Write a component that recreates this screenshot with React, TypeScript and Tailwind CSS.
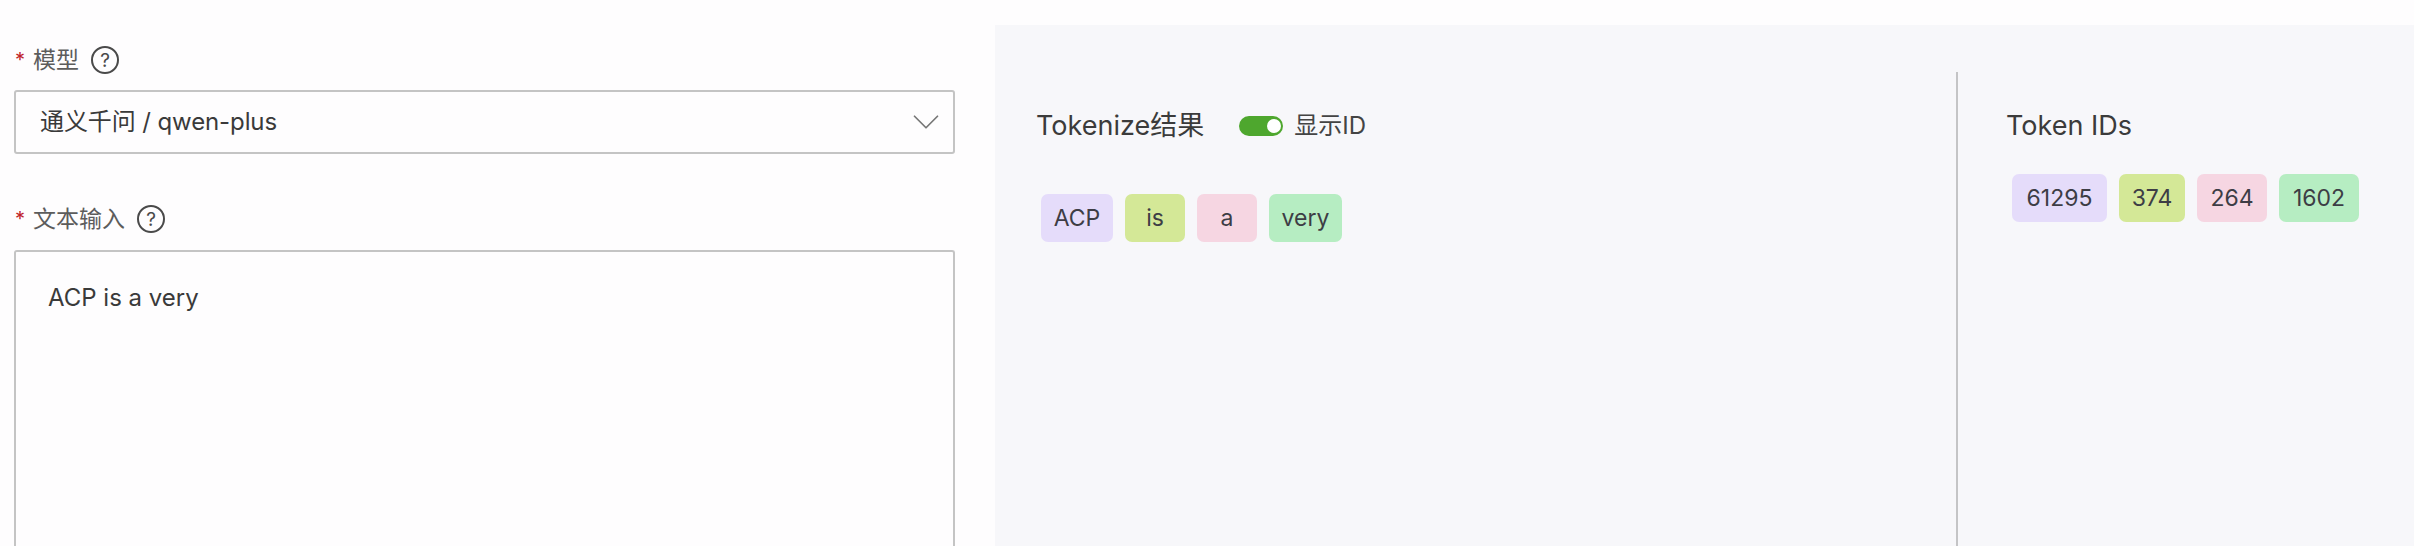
import { ChevronDown } from 'lucide-react'

const colors = ['bg-[#e5dcfa]', 'bg-[#d4e897]', 'bg-[#f6d6e2]', 'bg-[#b6edc2]']

const fontStack = '[font-family:"Inter","Noto_Sans_CJK_SC",sans-serif]'

function HelpIcon() {
  return (
    <span className="flex h-[28px] w-[28px] items-center justify-center rounded-full border-2 border-[#4a4a4a] text-[19px] leading-none text-[#4a4a4a]">
      ?
    </span>
  )
}

function FieldLabel({ text }: { text: string }) {
  return (
    <div className="flex h-[30px] items-center pl-[15px] text-[23px] text-[#5c5c5c]">
      <span className="mr-[8px] text-[20px] text-[#c0232c]">*</span>
      <span className="mr-[12px]">{text}</span>
      <HelpIcon />
    </div>
  )
}

function Token({ text, color, width }: { text: string; color: string; width: string }) {
  return (
    <span className={`flex h-[48px] items-center justify-center rounded-[7px] text-[23px] text-[#3d3d45] ${color} ${width}`}>
      {text}
    </span>
  )
}

export default function App() {
  return (
    <div className={`flex h-[546px] w-[2414px] overflow-hidden bg-[#fefdfe] ${fontStack}`}>
      <div className="flex w-[995px] shrink-0 flex-col pt-[45px]">
        <FieldLabel text="模型" />
        <div className="mt-[15px] ml-[14px] flex h-[64px] w-[941px] items-center justify-between rounded-[3px] border-2 border-[#c4c4c4] pr-[4px] pl-[24px] text-[24px] tracking-[-0.1px] text-[#3a3a3a]">
          <span>通义千问 / qwen-plus</span>
          <ChevronDown className="h-[46px] w-[46px] text-[#777777]" strokeWidth={0.9} />
        </div>
        <div className="mt-[50px]">
          <FieldLabel text="文本输入" />
        </div>
        <div className="mt-[16px] ml-[14px] w-[941px] flex-1 rounded-t-[3px] border-x-2 border-t-2 border-[#c4c4c4] pt-[30px] pl-[32px] text-[24px] leading-[32px] text-[#3a3a3a]">
          ACP is a very
        </div>
      </div>
      <div className="mt-[25px] flex flex-1 bg-[#f7f7fa] pt-[47px]">
        <div className="w-[961px] shrink-0 pt-[39px] pl-[41px]">
          <div className="flex h-[30px] items-center">
            <span className="text-[27px] text-[#3b3b3b]">Tokenize结果</span>
            <span className="relative mr-[11px] ml-[35px] h-[20px] w-[44px] rounded-full bg-[#4ea72e]">
              <span className="absolute top-[3px] right-[2px] h-[14px] w-[14px] rounded-full bg-white" />
            </span>
            <span className="text-[24px] text-[#444444]">显示ID</span>
          </div>
          <div className="mt-[53px] ml-[5px] flex gap-[12px]">
            <Token text="ACP" color={colors[0]} width="w-[72px]" />
            <Token text="is" color={colors[1]} width="w-[60px]" />
            <Token text="a" color={colors[2]} width="w-[60px]" />
            <Token text="very" color={colors[3]} width="w-[73px]" />
          </div>
        </div>
        <div className="flex-1 border-l-2 border-[#c4c4c6] pt-[39px] pl-[48px]">
          <div className="flex h-[30px] items-center text-[27px] text-[#3b3b3b]">Token IDs</div>
          <div className="mt-[33px] ml-[6px] flex gap-[12px]">
            <Token text="61295" color={colors[0]} width="w-[95px]" />
            <Token text="374" color={colors[1]} width="w-[66px]" />
            <Token text="264" color={colors[2]} width="w-[70px]" />
            <Token text="1602" color={colors[3]} width="w-[80px]" />
          </div>
        </div>
      </div>
    </div>
  )
}
